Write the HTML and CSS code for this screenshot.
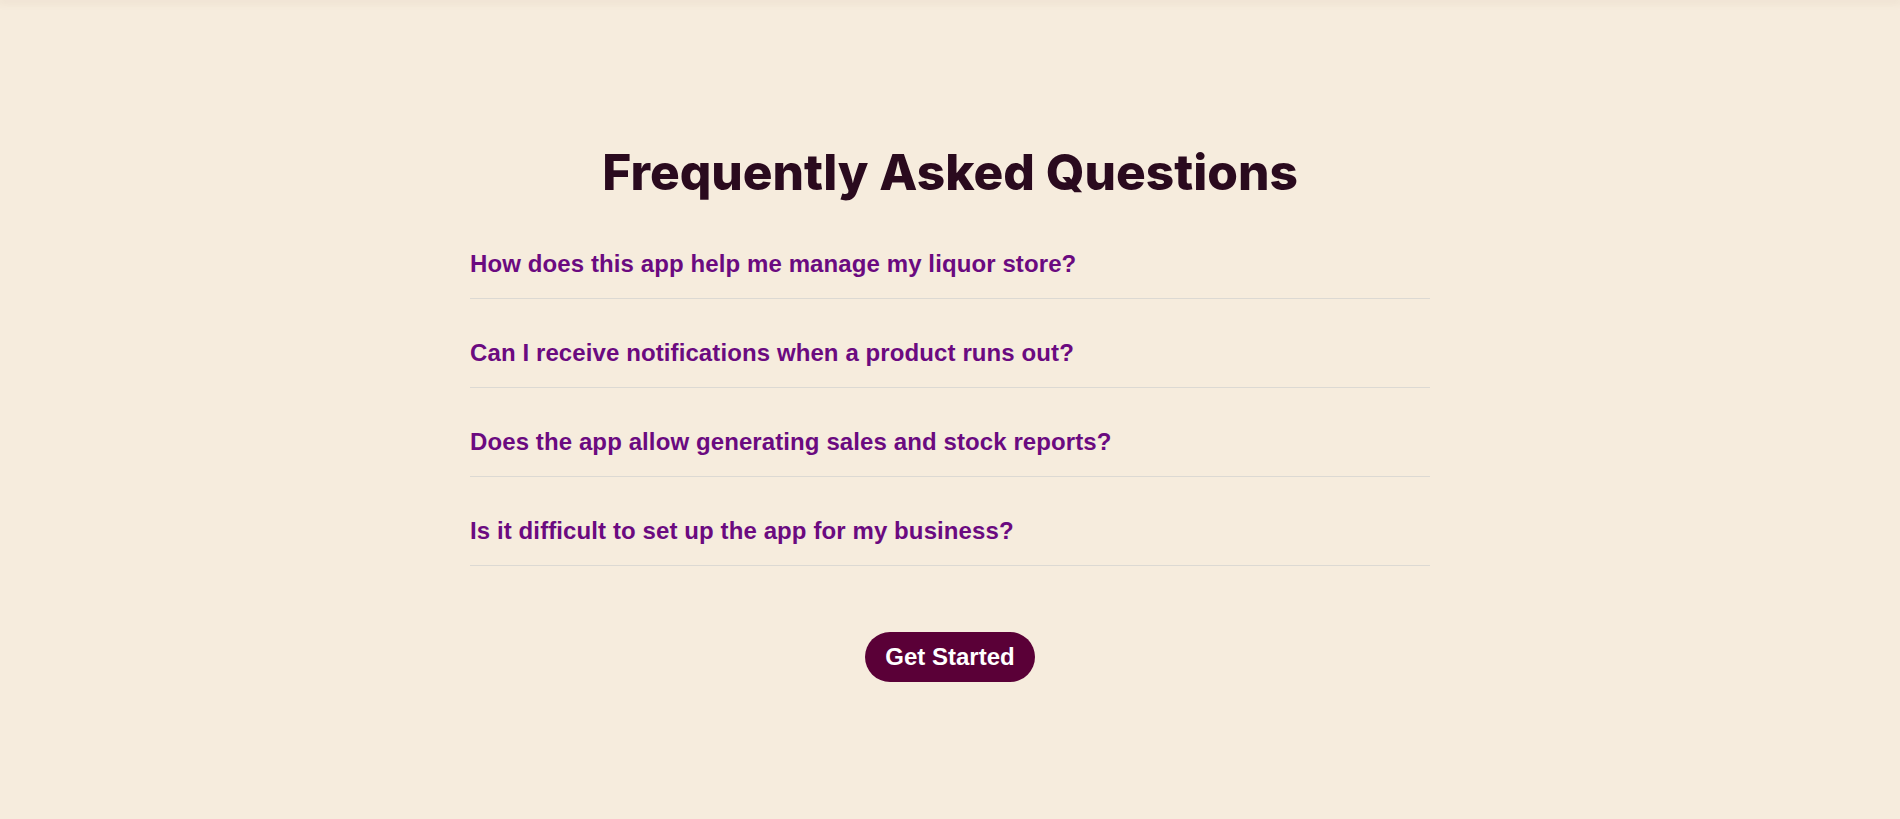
FILE: index.html
```html
<!DOCTYPE html>
<html lang="en">
<head>
<meta charset="utf-8">
<title>FAQ</title>
<link rel="stylesheet" href="styles.css">
</head>
<body>
<div class="topshade"></div>
<section class="faq">
  <h2 class="faq-title">Frequently Asked Questions</h2>
  <div class="faq-list">
    <div class="faq-item"><h3 class="faq-q">How does this app help me manage my liquor store?</h3></div>
    <div class="faq-item"><h3 class="faq-q">Can I receive notifications when a product runs out?</h3></div>
    <div class="faq-item"><h3 class="faq-q">Does the app allow generating sales and stock reports?</h3></div>
    <div class="faq-item"><h3 class="faq-q">Is it difficult to set up the app for my business?</h3></div>
  </div>
  <div class="cta">
    <a class="cta-btn" href="#">Get Started</a>
  </div>
</section>
</body>
</html>
```
FILE: styles.css
```css
html, body {
  margin: 0;
  padding: 0;
}
body {
  background: #f6ecdd;
  font-family: "Liberation Sans", Arial, sans-serif;
  min-height: 819px;
}
.topshade {
  height: 0;
  box-shadow: 0 0 8px 2px rgba(120, 90, 50, 0.12);
}
.faq {
  max-width: 960px;
  margin: 0 auto;
  padding-top: 143px;
}
.faq-title {
  margin: 0;
  text-align: center;
  font-family: Inter, "Open Sans", sans-serif;
  font-weight: 800;
  font-size: 49.6px;
  line-height: 58px;
  color: #2a0a1e;
}
.faq-list {
  margin-top: 9px;
}
.faq-item {
  padding: 40px 0 20px;
  border-bottom: 1px solid #dcd9d3;
}
.faq-q {
  margin: 0;
  font-size: 24px;
  line-height: 28px;
  font-weight: 700;
  letter-spacing: 0.1px;
  color: #6b0a80;
}
.cta {
  display: flex;
  justify-content: center;
  padding-top: 66px;
}
.cta-btn {
  display: inline-block;
  padding: 11px 20px;
  border-radius: 25px;
  background: #5a0037;
  color: #ffffff;
  font-weight: 700;
  font-size: 24px;
  line-height: 28px;
  text-decoration: none;
}
```
